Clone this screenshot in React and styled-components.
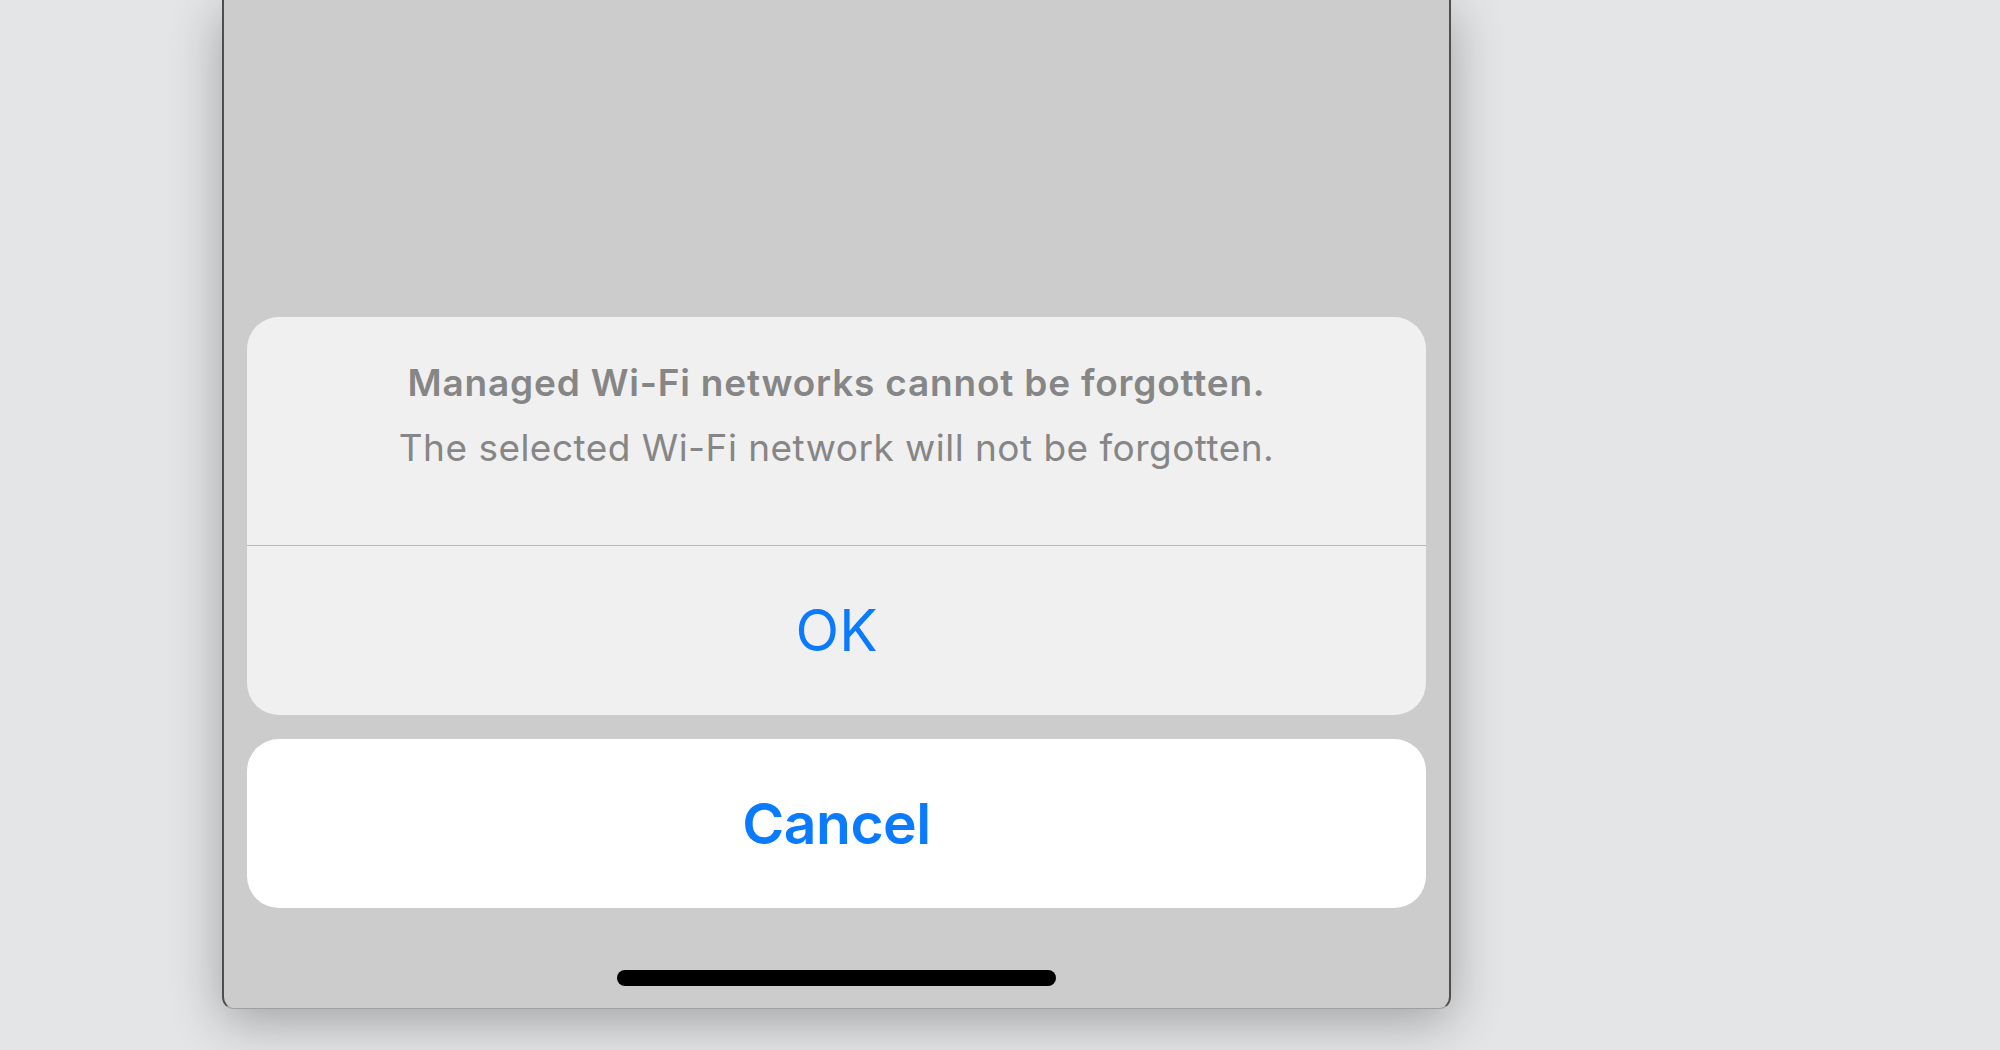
import React from 'react'
import styled, { createGlobalStyle } from 'styled-components'

const GlobalStyle = createGlobalStyle`
  html, body {
    margin: 0;
    padding: 0;
    background: #e4e5e7;
    overflow: hidden;
  }
  body {
    font-family: Inter, "Noto Sans", "Liberation Sans", sans-serif;
  }
`

const Page = styled.div`
  width: 2000px;
  height: 1050px;
  display: flex;
  align-items: flex-start;
  padding-left: 222px;
  box-sizing: border-box;
`

const Phone = styled.div`
  width: 1229px;
  height: 1009px;
  box-sizing: border-box;
  background: #cccccc;
  border-left: 2px solid #4e4e4e;
  border-right: 2px solid #4e4e4e;
  border-bottom: 1px solid #a0a0a0;
  border-radius: 0 0 12px 12px;
  box-shadow: 0 12px 52px rgba(0, 0, 0, 0.3);
  display: flex;
  flex-direction: column;
  justify-content: flex-end;
  align-items: stretch;
  padding: 0 23px 22px;
`

const Alert = styled.div`
  background: #f0f0f0;
  border-radius: 32px;
  display: flex;
  flex-direction: column;
  overflow: hidden;
`

const Header = styled.div`
  height: 229px;
  box-sizing: border-box;
  padding-top: 42px;
  display: flex;
  flex-direction: column;
  align-items: center;
  gap: 17px;
  border-bottom: 1px solid #b9b9b9;
  color: #868686;
`

const Title = styled.div`
  font-size: 37px;
  line-height: 48px;
  font-weight: ${p => (p.$bold ? 600 : 400)};
  letter-spacing: ${p => (p.$bold ? '0.8px' : '0.47px')};
`

const Action = styled.div`
  height: ${p => p.$h}px;
  display: flex;
  align-items: center;
  justify-content: center;
  color: #0a7aff;
  font-size: 57px;
  font-weight: ${p => (p.$bold ? 600 : 400)};
  letter-spacing: ${p => (p.$bold ? '-0.5px' : '0')};
  background: ${p => (p.$white ? '#ffffff' : 'transparent')};
  border-radius: ${p => (p.$white ? '32px' : '0')};
  margin-top: ${p => p.$mt || 0}px;
`

const HomeBar = styled.div`
  align-self: center;
  width: 439px;
  height: 16px;
  border-radius: 8px;
  background: #000;
  margin-top: 62px;
`

export default function App() {
  return (
    <>
      <GlobalStyle />
      <Page>
        <Phone>
          <Alert>
            <Header>
              <Title $bold>Managed Wi-Fi networks cannot be forgotten.</Title>
              <Title>The selected Wi-Fi network will not be forgotten.</Title>
            </Header>
            <Action $h={169}>OK</Action>
          </Alert>
          <Action $h={169} $white $bold $mt={24}>Cancel</Action>
          <HomeBar />
        </Phone>
      </Page>
    </>
  )
}
